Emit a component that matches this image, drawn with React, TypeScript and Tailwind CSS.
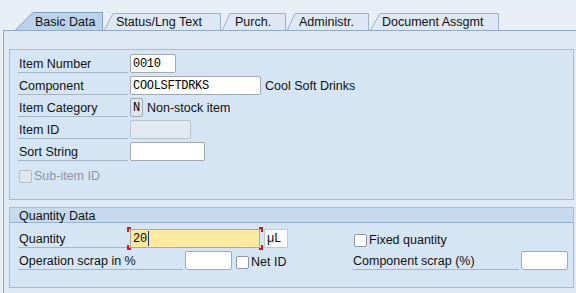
import type { ReactNode } from "react";

type TabDef = { label: string; w: number; wClass: string; slant: number; pad: string; active?: boolean };

const tabs: TabDef[] = [
  { label: "Basic Data", w: 89, wClass: "w-[89px]", slant: 18, pad: "pl-[20px]", active: true },
  { label: "Status/Lng Text", w: 118, wClass: "w-[118px]", slant: 9, pad: "pl-[12px]" },
  { label: "Purch.", w: 65, wClass: "w-[65px]", slant: 8, pad: "pl-[13px]" },
  { label: "Administr.", w: 83, wClass: "w-[83px]", slant: 8, pad: "pl-[12px]" },
  { label: "Document Assgmt", w: 130, wClass: "w-[130px]", slant: 10, pad: "pl-[12px]" },
];

const Tab = ({ t }: { t: TabDef }) => {
  const h = t.active ? 18 : 17;
  return (
    <div className={`relative ${t.wClass} ${t.active ? "h-[18px]" : "h-[17px]"} flex items-center ${t.pad}`}>
      <svg className="absolute inset-0" width={t.w} height={h} viewBox={`0 0 ${t.w} ${h}`}>
        <path
          d={`M0.5 ${h} L${t.slant} 0.5 L${t.w - 1.5} 0.5 L${t.w - 1.5} ${h}`}
          fill={t.active ? "#bcd2ea" : "#dde8f4"}
          stroke={t.active ? "#7f9dbf" : "#98b1cc"}
          strokeWidth="1"
        />
      </svg>
      <span className="relative leading-none pt-[2px] text-[12.5px]">{t.label}</span>
    </div>
  );
};

const Label = ({ children, w = "w-[110px]" }: { children: ReactNode; w?: string }) => (
  <div className={`${w} h-[19px] border-b border-[#a6b5c5] pl-px leading-[21px] whitespace-nowrap`}>{children}</div>
);

const mono = "font-['Liberation_Mono','Courier_New',monospace] text-[12px] tracking-[-0.3px] text-black";

const Field = ({ w, value, tone = "white" }: { w: string; value?: string; tone?: "white" | "ro" | "off" }) => {
  const bg =
    tone === "white"
      ? "bg-white border-[#a3a9b0]"
      : tone === "ro"
        ? "bg-[#dde6ef] border-[#9eabb8]"
        : "bg-[#e2e9f0] border-[#b7c3cf]";
  return (
    <div className={`${w} ml-[2px] h-[19px] border ${bg} rounded-[2px] px-[2px] leading-[18px] ${mono}`}>{value}</div>
  );
};

const Check = ({ disabled }: { disabled?: boolean }) => (
  <div
    className={`w-[13px] h-[13px] rounded-[2px] border ${disabled ? "border-[#b4bcc5] bg-[#dfe6ee]" : "border-[#8e99a6] bg-white"}`}
  />
);

const Row = ({ children }: { children: ReactNode }) => <div className="flex h-[22px] items-start">{children}</div>;

export default function App() {
  return (
    <div className="w-[576px] h-[293px] overflow-hidden bg-[#e7eef6] font-['Liberation_Sans',Arial,sans-serif] text-[12.5px] text-[#111]">
      {/* tab strip */}
      <div className="h-[30px] flex items-end pl-[15px]">
        {tabs.map((t) => (
          <Tab key={t.label} t={t} />
        ))}
      </div>

      <div className="ml-[3px] h-[263px] border-l border-t border-[#8fa9c6] bg-[#dfe9f4] pt-[18px] pl-[5px]">
        {/* general group */}
        <div className="w-[565px] h-[151px] border border-[#a6bdd6] bg-[#d5e5f4] pt-[4px] pl-[8px]">
          <Row>
            <Label>Item Number</Label>
            <Field w="w-[46px]" value="0010" />
          </Row>
          <Row>
            <Label>Component</Label>
            <Field w="w-[131px]" value="COOLSFTDRKS" />
            <span className="ml-[4px] leading-[20px]">Cool Soft Drinks</span>
          </Row>
          <Row>
            <Label>Item Category</Label>
            <Field w="w-[13px]" value="N" tone="ro" />
            <span className="ml-[4px] leading-[20px]">Non-stock item</span>
          </Row>
          <Row>
            <Label>Item ID</Label>
            <Field w="w-[61px]" tone="off" />
          </Row>
          <Row>
            <Label>Sort String</Label>
            <Field w="w-[75px]" />
          </Row>
          <div className="flex items-center h-[22px] pl-px pt-[2px]">
            <Check disabled />
            <span className="ml-[2px] text-[#8d97a2]">Sub-item ID</span>
          </div>
        </div>

        {/* quantity group */}
        <div className="mt-[7px] w-[565px] h-[81px] border border-[#a6bdd6] bg-[#d5e5f4]">
          <div className="h-[15px] bg-[#c6d9ed] border-b border-[#98b3cf] pl-[9px] leading-[16px]">Quantity Data</div>
          <div className="pt-[6px] pl-[8px]">
            <Row>
              <div className="w-[334px] flex items-start">
                <Label>Quantity</Label>
                <div className="relative ml-[2px]">
                  <div className={`w-[130px] h-[19px] border border-[#a9a9a0] bg-[#fdeaa0] px-[2px] flex items-center ${mono}`}>
                    20
                    <span className="ml-px w-px h-[15px] bg-[#1a2f7a]" />
                  </div>
                  <span className="absolute -left-[3px] -top-[2px] w-[4px] h-[5px] border-l-2 border-t-2 border-[#d8141a]" />
                  <span className="absolute -left-[3px] -bottom-[2px] w-[4px] h-[5px] border-l-2 border-b-2 border-[#d8141a]" />
                  <span className="absolute -right-[3px] -top-[2px] w-[4px] h-[5px] border-r-2 border-t-2 border-[#d8141a]" />
                  <span className="absolute -right-[3px] -bottom-[2px] w-[4px] h-[5px] border-r-2 border-b-2 border-[#d8141a]" />
                </div>
                <div className={`ml-[4px] w-[24px] h-[19px] border border-[#c3c8ce] bg-white px-[2px] leading-[18px] ${mono}`}>
                  µL
                </div>
              </div>
              <div className="flex items-center h-[19px] pl-[2px] pt-[4px]">
                <Check />
                <span className="ml-[2px]">Fixed quantity</span>
              </div>
            </Row>
            <Row>
              <div className="w-[334px] flex items-start">
                <Label w="w-[165px]">Operation scrap in %</Label>
                <Field w="w-[47px]" />
                <div className="ml-[4px] flex items-center h-[19px] pt-[3px]">
                  <Check />
                  <span className="ml-[2px]">Net ID</span>
                </div>
              </div>
              <Label w="w-[167px]">Component scrap (%)</Label>
              <Field w="w-[47px]" />
            </Row>
          </div>
        </div>
      </div>
    </div>
  );
}
